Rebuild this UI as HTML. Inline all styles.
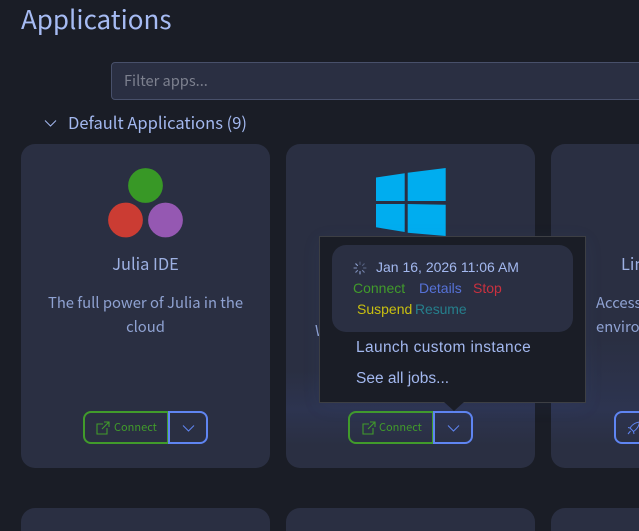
<!DOCTYPE html>
<html><head><meta charset="utf-8"><style>
*{box-sizing:border-box}
html,body{margin:0;padding:0;width:639px;height:531px;overflow:hidden;background:#1a1d26}
body{position:relative;font-family:"Noto Sans CJK JP","Liberation Sans",sans-serif;color:#a3b8ef}
.a{position:absolute;white-space:nowrap}
.card{position:absolute;background:#2a2f42;border-radius:14px;width:249px}
.t{position:absolute;text-align:center;white-space:nowrap;color:#9db0e2}
.d{color:#8fa2d2;font-size:14.8px}
.btn{position:absolute;top:411px;height:33px;border:2px solid #419b2b;border-radius:8px 0 0 8px}
.drop{position:absolute;top:411px;height:33px;width:40px;border:2px solid #5f85f2;border-radius:0 8px 8px 0}
.r{font-family:"Liberation Sans",sans-serif;font-size:14px;position:absolute;white-space:nowrap;line-height:18px}
.c{font-size:11px;line-height:18px;color:#419b2b;top:418px}
</style></head><body>
<div class="a" style="left:21px;top:0;font-size:26px;line-height:38px;color:#a6bbf3">Applications</div>
<div class="a" style="left:111px;top:62px;width:540px;height:38px;background:#2a2f42;border:1px solid #48506a;border-radius:4px;padding-left:12px;font-size:14.6px;line-height:35px;color:#7d818f">Filter apps...</div>
<svg class="a" style="left:44px;top:119px" width="13" height="9" viewBox="0 0 13 9"><path d="M1 1.500 6.500 7 12 1.500" fill="none" stroke="#a3b8ef" stroke-width="1"/></svg>
<div class="a" style="left:68px;top:110px;font-size:16.5px;line-height:24px;color:#a3b8ef">Default Applications (9)</div>

<div class="card" style="left:21px;top:144px;height:324px"></div>
<div class="card" style="left:286px;top:144px;height:324px;background:linear-gradient(#2a2f42 70%,#2d3450 82%,#2a2f42 93%)"></div>
<div class="card" style="left:551px;top:144px;height:324px;background:linear-gradient(#2a2f42 60%,#2d3450 82%,#2a2f42 93%)"></div>
<div class="card" style="left:21px;top:508px;height:40px"></div>
<div class="card" style="left:286px;top:508px;height:40px"></div>
<div class="card" style="left:551px;top:508px;height:40px"></div>

<svg class="a" style="left:100px;top:160px" width="90" height="85"><circle cx="45.500" cy="25.500" r="17.400" fill="#389826"/><circle cx="25.500" cy="60" r="17.400" fill="#cb3c33"/><circle cx="65.500" cy="60" r="17.400" fill="#9558b2"/></svg>
<div class="t" style="left:21px;width:249px;top:251px;font-size:16.400px;line-height:24px">Julia IDE</div>
<div class="t d" style="left:21px;width:249px;top:291px;line-height:24px">The full power of Julia in the<br>cloud</div>

<div class="btn" style="left:83px;width:86px"></div>
<svg class="a" style="left:96px;top:421px" width="14" height="14" viewBox="0 0 14 14" fill="none" stroke="#419b2b" stroke-width="1.100"><path d="M7 3H1v10h10V7M8 1h5v5M13 1 6 8"/></svg>
<div class="a c" style="left:114px">Connect</div>
<div class="drop" style="left:168px"></div>
<svg class="a" style="left:182px;top:424px" width="13" height="9" viewBox="0 0 13 9"><path d="M1 1.500 6.500 7 12 1.500" fill="none" stroke="#5f85f2" stroke-width="1"/></svg>

<svg class="a" style="left:370px;top:160px" width="80" height="80"><g fill="#00adef"><path d="M6 17.500 34.700 13.200V41H6z"/><path d="M37.700 12.700 75.700 8V41H37.700z"/><path d="M6 44H34.700V72L6 67.300z"/><path d="M37.700 44 75.700 44.700V76L37.700 72.700z"/></g></svg>

<div class="a d" style="left:315px;top:319px;line-height:24px">W</div>
<div class="a" style="left:621px;top:251px;font-size:16.400px;line-height:24px;color:#9db0e2">Linux</div>
<div class="a d" style="left:596px;top:291px;line-height:24px">Access<br>enviro</div>

<div class="btn" style="left:348px;width:86px"></div>
<svg class="a" style="left:362px;top:421px" width="14" height="14" viewBox="0 0 14 14" fill="none" stroke="#419b2b" stroke-width="1.100"><path d="M7 3H1v10h10V7M8 1h5v5M13 1 6 8"/></svg>
<div class="a c" style="left:379px">Connect</div>
<div class="drop" style="left:433px"></div>
<svg class="a" style="left:447px;top:424px" width="13" height="9" viewBox="0 0 13 9"><path d="M1 1.500 6.500 7 12 1.500" fill="none" stroke="#5f85f2" stroke-width="1"/></svg>

<div class="a" style="left:614px;top:411px;width:60px;height:33px;border:2px solid #5f85f2;border-radius:8px 0 0 8px"></div>
<svg class="a" style="left:627px;top:421px" width="13" height="14" viewBox="0 0 13 14" fill="none" stroke="#5f85f2" stroke-width="1"><path d="M12.500 1C8 1.500 5 4 3 7l3.500 3.500C9.500 8.500 12 6 12.500 1zM3 7 1 6.500M6.500 10.500 7 13M3.500 10 1 13"/></svg>

<div class="a" style="left:319px;top:236px;width:267px;height:167px;background:#1a1d26;border:1px solid #3d3f44;box-shadow:0 4px 18px rgba(70,100,190,.08)"></div>
<svg class="a" style="left:444px;top:401px" width="20" height="10"><path d="M0 1H20L10 10z" fill="#1a1d26"/></svg>
<div class="a" style="left:332px;top:245px;width:241px;height:87px;background:#2a2f42;border-radius:14px"></div>
<svg class="a" style="left:353px;top:261px" width="14" height="14" viewBox="0 0 14 14" stroke="#8fa2d2" stroke-width="1.100" stroke-linecap="round"><path d="M7 1v2.500" opacity=".4"/><path d="M7 10.500V13"/><path d="M1 7h2.500" opacity=".9"/><path d="M10.500 7H13" opacity=".5"/><path d="M2.800 2.800l1.700 1.700"/><path d="M9.500 9.500l1.700 1.700" opacity=".7"/><path d="M11.200 2.800 9.500 4.500" opacity=".4"/><path d="M4.500 9.500 2.800 11.200" opacity=".8"/></svg>
<div class="r" style="left:376px;top:258px;color:#a3b8ef">Jan 16, 2026 11:06 AM</div>
<div class="r" style="left:353px;top:279px;color:#419b2b">Connect</div>
<div class="r" style="left:419px;top:279px;color:#5672d8">Details</div>
<div class="r" style="left:473px;top:279px;color:#c9313f">Stop</div>
<div class="r" style="left:357px;top:300px;color:#c9c010">Suspend</div>
<div class="r" style="left:415px;top:300px;letter-spacing:-.1px;color:#257f8c">Resume</div>
<div class="r" style="left:356px;top:339px;font-size:15.500px;letter-spacing:.36px;color:#a3b8ef">Launch custom instance</div>
<div class="r" style="left:356px;top:370px;font-size:15.500px;color:#a3b8ef">See all jobs...</div>
</body></html>
